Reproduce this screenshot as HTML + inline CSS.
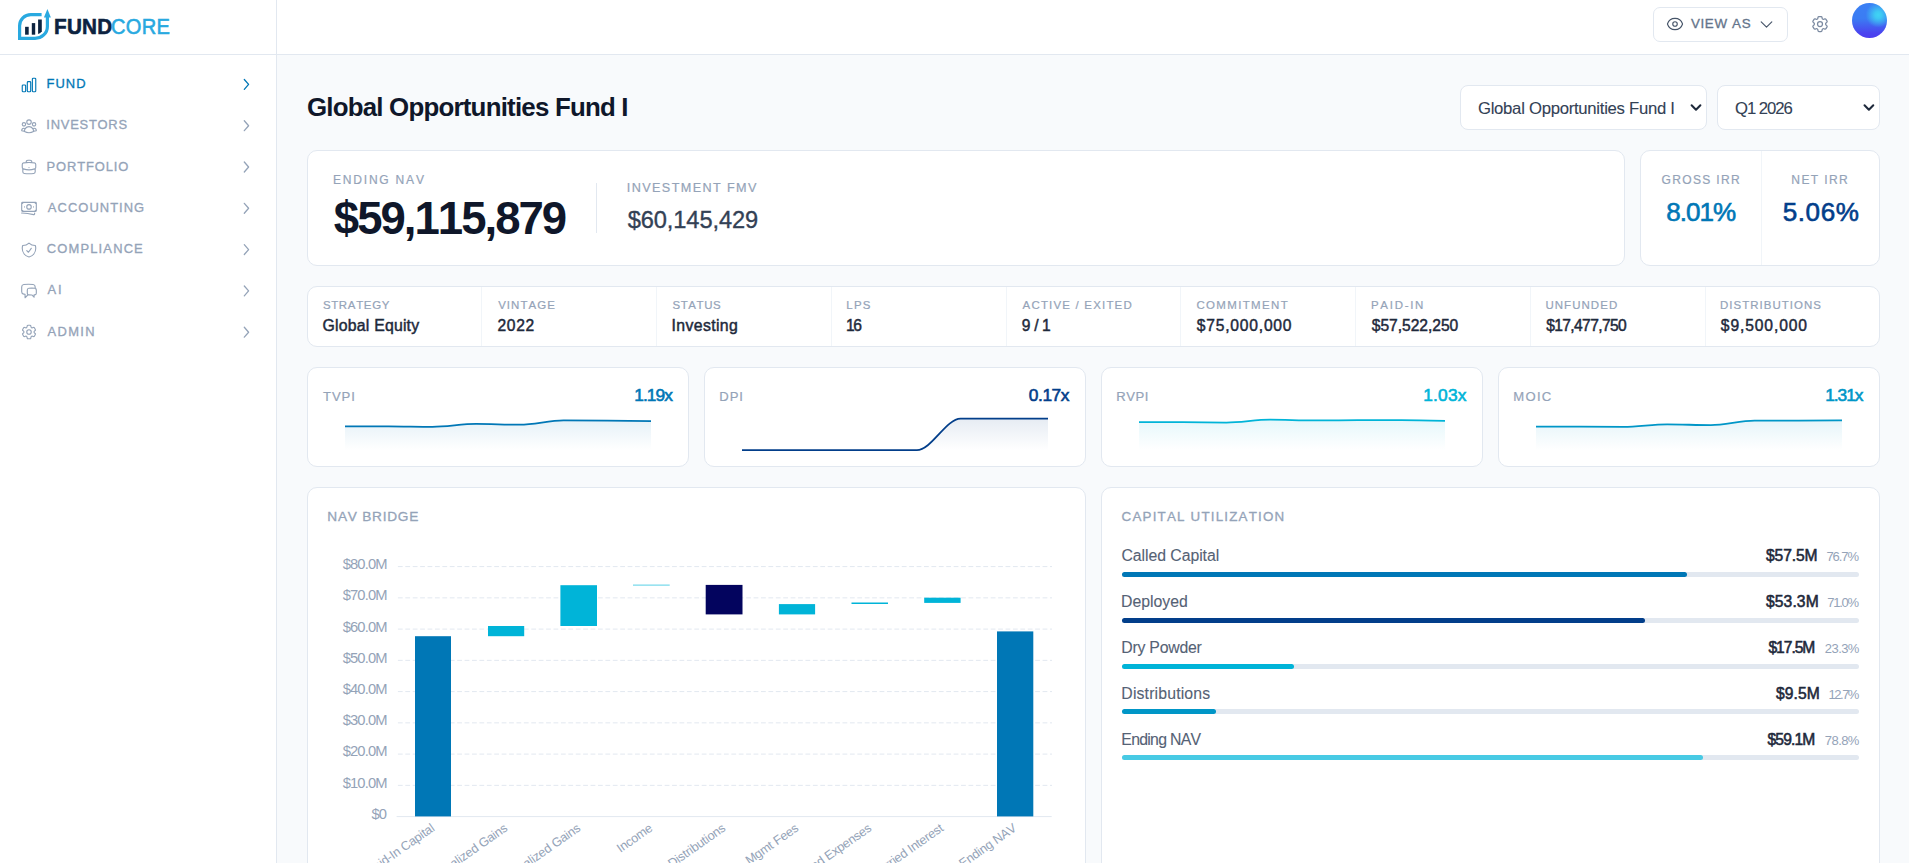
<!DOCTYPE html>
<html><head><meta charset="utf-8"><title>FundCore</title>
<style>
*{box-sizing:border-box;margin:0;padding:0}
html,body{width:1909px;height:863px;overflow:hidden;background:#f8fafc;font-family:'Liberation Sans',sans-serif}
.t{position:absolute;white-space:pre;font-kerning:none;font-family:'Liberation Sans',sans-serif}
.ic{position:absolute;overflow:visible}
.card{position:absolute;background:#fff;border:1px solid #e2e8f0;border-radius:10px}
.abs{position:absolute}
</style></head><body>

<div class="abs" style="left:0;top:0;width:277px;height:863px;background:#fff;border-right:1px solid #e2e8f0"></div>
<div class="abs" style="left:0;top:0;width:1909px;height:55px;background:#fff;border-bottom:1px solid #e2e8f0"></div>
<div class="abs" style="left:276px;top:0;width:1px;height:863px;background:#e2e8f0"></div>
<svg class="abs" style="left:0;top:0" width="60" height="50" viewBox="0 0 60 50">
<path d="M41.6,14.6 H30.8 C24.6,14.6 19.6,19.6 19.6,25.8 V38.3 H35 C41.8,38.3 47.4,33.2 47.4,26.4 V16" fill="none" stroke="#29a9e0" stroke-width="3.2" stroke-linejoin="miter"/>
<path d="M43.9,17.4 L47.4,9 L50.9,17.4 Z" fill="#29a9e0"/>
<g fill="#0c2340"><rect x="25.1" y="26.8" width="3.6" height="7.9"/><rect x="31.8" y="23.1" width="3.4" height="11.6"/><path d="M38.1,19.4 H41.8 V31.2 Q40.6,33.4 38.1,33.9 Z"/></g>
</svg>
<svg class="ic" style="left:19.75px;top:75.80px;width:18px;height:18px" viewBox="0 0 24 24" fill="none" stroke="#0077b6" stroke-width="1.5" stroke-linecap="round" stroke-linejoin="round"><path d="M3 13.125C3 12.504 3.504 12 4.125 12h2.25c.621 0 1.125.504 1.125 1.125v6.75C7.5 20.496 6.996 21 6.375 21h-2.25A1.125 1.125 0 0 1 3 19.875v-6.75ZM9.75 8.625c0-.621.504-1.125 1.125-1.125h2.25c.621 0 1.125.504 1.125 1.125v11.25c0 .621-.504 1.125-1.125 1.125h-2.25a1.125 1.125 0 0 1-1.125-1.125V8.625ZM16.5 4.125c0-.621.504-1.125 1.125-1.125h2.25C20.496 3 21 3.504 21 4.125v15.75c0 .621-.504 1.125-1.125 1.125h-2.25a1.125 1.125 0 0 1-1.125-1.125V4.125Z"/></svg>
<svg class="ic" style="left:0;top:0;width:1px;height:1px"><path d="M244.30,79.45 L248.60,84.40 L244.30,89.35" fill="none" stroke="#0077b6" stroke-width="1.3" stroke-linecap="round" stroke-linejoin="round"/></svg>
<svg class="ic" style="left:19.75px;top:116.98px;width:18px;height:18px" viewBox="0 0 24 24" fill="none" stroke="#94a3b8" stroke-width="1.5" stroke-linecap="round" stroke-linejoin="round"><path d="M18 18.72a9.094 9.094 0 0 0 3.741-.479 3 3 0 0 0-4.682-2.72m.94 3.198.001.031c0 .225-.012.447-.037.666A11.944 11.944 0 0 1 12 21c-2.17 0-4.207-.576-5.963-1.584A6.062 6.062 0 0 1 6 18.719m12 0a5.971 5.971 0 0 0-.941-3.197m0 0A5.995 5.995 0 0 0 12 12.75a5.995 5.995 0 0 0-5.058 2.772m0 0a3 3 0 0 0-4.681 2.72 8.986 8.986 0 0 0 3.74.477m.94-3.197a5.971 5.971 0 0 0-.94 3.197M15 6.75a3 3 0 1 1-6 0 3 3 0 0 1 6 0Zm6 3a2.25 2.25 0 1 1-4.5 0 2.25 2.25 0 0 1 4.5 0Zm-13.5 0a2.25 2.25 0 1 1-4.5 0 2.25 2.25 0 0 1 4.5 0Z"/></svg>
<svg class="ic" style="left:0;top:0;width:1px;height:1px"><path d="M244.30,120.75 L248.60,125.70 L244.30,130.65" fill="none" stroke="#94a3b8" stroke-width="1.3" stroke-linecap="round" stroke-linejoin="round"/></svg>
<svg class="ic" style="left:19.75px;top:158.16px;width:18px;height:18px" viewBox="0 0 24 24" fill="none" stroke="#94a3b8" stroke-width="1.5" stroke-linecap="round" stroke-linejoin="round"><path d="M20.25 14.15v4.25c0 1.094-.787 2.036-1.872 2.18-2.087.277-4.216.42-6.378.42s-4.291-.143-6.378-.42c-1.085-.144-1.872-1.086-1.872-2.18v-4.25m16.5 0a2.18 2.18 0 0 0 .75-1.661V8.706c0-1.081-.768-2.015-1.837-2.175a48.114 48.114 0 0 0-3.413-.387m4.5 8.006c-.194.165-.42.295-.673.38A23.978 23.978 0 0 1 12 15.75c-2.648 0-5.195-.429-7.577-1.22a2.016 2.016 0 0 1-.673-.38m0 0A2.18 2.18 0 0 1 3 12.489V8.706c0-1.081.768-2.015 1.837-2.175a48.111 48.111 0 0 1 3.413-.387m7.5 0V5.25A2.25 2.25 0 0 0 13.5 3h-3a2.25 2.25 0 0 0-2.25 2.25v.894m7.5 0a48.667 48.667 0 0 0-7.5 0M12 12.75h.008v.008H12v-.008Z"/></svg>
<svg class="ic" style="left:0;top:0;width:1px;height:1px"><path d="M244.30,162.05 L248.60,167.00 L244.30,171.95" fill="none" stroke="#94a3b8" stroke-width="1.3" stroke-linecap="round" stroke-linejoin="round"/></svg>
<svg class="ic" style="left:19.75px;top:199.34px;width:18px;height:18px" viewBox="0 0 24 24" fill="none" stroke="#94a3b8" stroke-width="1.5" stroke-linecap="round" stroke-linejoin="round"><path d="M2.25 18.75a60.07 60.07 0 0 1 15.797 2.101c.727.198 1.453-.342 1.453-1.096V18.75M3.75 4.5v.75A.75.75 0 0 1 3 6h-.75m0 0v-.375c0-.621.504-1.125 1.125-1.125H20.25M2.25 6v9m18-10.5v.75c0 .414.336.75.75.75h.75m-1.5-1.5h.375c.621 0 1.125.504 1.125 1.125v9.75c0 .621-.504 1.125-1.125 1.125h-.375m1.5-1.5H21a.75.75 0 0 0-.75.75v.75m0 0H3.75m0 0h-.375a1.125 1.125 0 0 1-1.125-1.125V15m1.5 1.5v-.75A.75.75 0 0 0 3 15h-.75M15 10.5a3 3 0 1 1-6 0 3 3 0 0 1 6 0Zm3 0h.008v.008H18V10.5Zm-12 0h.008v.008H6V10.5Z"/></svg>
<svg class="ic" style="left:0;top:0;width:1px;height:1px"><path d="M244.30,203.35 L248.60,208.30 L244.30,213.25" fill="none" stroke="#94a3b8" stroke-width="1.3" stroke-linecap="round" stroke-linejoin="round"/></svg>
<svg class="ic" style="left:19.75px;top:240.52px;width:18px;height:18px" viewBox="0 0 24 24" fill="none" stroke="#94a3b8" stroke-width="1.5" stroke-linecap="round" stroke-linejoin="round"><path d="M9 12.75 11.25 15 15 9.75m-3-7.036A11.959 11.959 0 0 1 3.598 6 11.99 11.99 0 0 0 3 9.749c0 5.592 3.824 10.29 9 11.623 5.176-1.332 9-6.03 9-11.622 0-1.31-.21-2.571-.598-3.751h-.152c-3.196 0-6.1-1.248-8.25-3.285Z"/></svg>
<svg class="ic" style="left:0;top:0;width:1px;height:1px"><path d="M244.30,244.65 L248.60,249.60 L244.30,254.55" fill="none" stroke="#94a3b8" stroke-width="1.3" stroke-linecap="round" stroke-linejoin="round"/></svg>
<svg class="ic" style="left:19.75px;top:281.70px;width:18px;height:18px" viewBox="0 0 24 24" fill="none" stroke="#94a3b8" stroke-width="1.5" stroke-linecap="round" stroke-linejoin="round"><path d="M20.25 8.511c.884.284 1.5 1.128 1.5 2.097v4.286c0 1.136-.847 2.1-1.98 2.193-.34.027-.68.052-1.02.072v3.091l-3-3c-1.354 0-2.694-.055-4.02-.163a2.115 2.115 0 0 1-.825-.242m9.345-8.334a2.126 2.126 0 0 0-.476-.095 48.64 48.64 0 0 0-8.048 0c-1.131.094-1.976 1.057-1.976 2.192v4.286c0 .837.46 1.58 1.155 1.951m9.345-8.334V6.637c0-1.621-1.152-3.026-2.76-3.235A48.455 48.455 0 0 0 11.25 3c-2.115 0-4.198.137-6.24.402-1.608.209-2.76 1.614-2.76 3.235v6.226c0 1.621 1.152 3.026 2.76 3.235.577.075 1.157.14 1.74.194V21l4.155-4.155"/></svg>
<svg class="ic" style="left:0;top:0;width:1px;height:1px"><path d="M244.30,285.95 L248.60,290.90 L244.30,295.85" fill="none" stroke="#94a3b8" stroke-width="1.3" stroke-linecap="round" stroke-linejoin="round"/></svg>
<svg class="ic" style="left:19.75px;top:322.88px;width:18px;height:18px" viewBox="0 0 24 24" fill="none" stroke="#94a3b8" stroke-width="1.5" stroke-linecap="round" stroke-linejoin="round"><path d="M9.594 3.94c.09-.542.56-.94 1.11-.94h2.593c.55 0 1.02.398 1.11.94l.213 1.281c.063.374.313.686.645.87.074.04.147.083.22.127.325.196.72.257 1.075.124l1.217-.456a1.125 1.125 0 0 1 1.37.49l1.296 2.247a1.125 1.125 0 0 1-.26 1.431l-1.003.827c-.293.241-.438.613-.43.992a7.723 7.723 0 0 1 0 .255c-.008.378.137.75.43.991l1.004.827c.424.35.534.955.26 1.43l-1.298 2.247a1.125 1.125 0 0 1-1.369.491l-1.217-.456c-.355-.133-.75-.072-1.076.124a6.47 6.47 0 0 1-.22.128c-.331.183-.581.495-.644.869l-.213 1.281c-.09.543-.56.94-1.11.94h-2.594c-.55 0-1.019-.398-1.11-.94l-.213-1.281c-.062-.374-.312-.686-.644-.87a6.52 6.52 0 0 1-.22-.127c-.325-.196-.72-.257-1.076-.124l-1.217.456a1.125 1.125 0 0 1-1.369-.49l-1.297-2.247a1.125 1.125 0 0 1 .26-1.431l1.004-.827c.292-.24.437-.613.43-.991a6.932 6.932 0 0 1 0-.255c.007-.38-.138-.751-.43-.992l-1.004-.827a1.125 1.125 0 0 1-.26-1.43l1.297-2.247a1.125 1.125 0 0 1 1.37-.491l1.216.456c.356.133.751.072 1.076-.124.072-.044.146-.086.22-.128.332-.183.582-.495.644-.869l.214-1.28Z"/><path d="M15 12a3 3 0 1 1-6 0 3 3 0 0 1 6 0Z"/></svg>
<svg class="ic" style="left:0;top:0;width:1px;height:1px"><path d="M244.30,327.25 L248.60,332.20 L244.30,337.15" fill="none" stroke="#94a3b8" stroke-width="1.3" stroke-linecap="round" stroke-linejoin="round"/></svg>
<div class="abs" style="left:1653px;top:7px;width:135px;height:35px;border:1px solid #e2e8f0;border-radius:7px;background:#fff"></div>
<svg class="ic" style="left:1666.00px;top:15.20px;width:18px;height:18px" viewBox="0 0 24 24" fill="none" stroke="#475569" stroke-width="1.5" stroke-linecap="round" stroke-linejoin="round"><path d="M2.036 12.322a1.012 1.012 0 0 1 0-.639C3.423 7.51 7.36 4.5 12 4.5c4.638 0 8.573 3.007 9.963 7.178.07.207.07.431 0 .639C20.577 16.49 16.64 19.5 12 19.5c-4.638 0-8.573-3.007-9.963-7.178Z"/><path d="M15 12a3 3 0 1 1-6 0 3 3 0 0 1 6 0Z"/></svg>
<svg class="ic" style="left:1758.00px;top:15.80px;width:17px;height:17px" viewBox="0 0 24 24" fill="none" stroke="#475569" stroke-width="1.6" stroke-linecap="round" stroke-linejoin="round"><path d="m19.5 8.25-7.5 7.5-7.5-7.5"/></svg>
<svg class="ic" style="left:1810.00px;top:14.00px;width:20px;height:20px" viewBox="0 0 24 24" fill="none" stroke="#7b8aa1" stroke-width="1.5" stroke-linecap="round" stroke-linejoin="round"><path d="M9.594 3.94c.09-.542.56-.94 1.11-.94h2.593c.55 0 1.02.398 1.11.94l.213 1.281c.063.374.313.686.645.87.074.04.147.083.22.127.325.196.72.257 1.075.124l1.217-.456a1.125 1.125 0 0 1 1.37.49l1.296 2.247a1.125 1.125 0 0 1-.26 1.431l-1.003.827c-.293.241-.438.613-.43.992a7.723 7.723 0 0 1 0 .255c-.008.378.137.75.43.991l1.004.827c.424.35.534.955.26 1.43l-1.298 2.247a1.125 1.125 0 0 1-1.369.491l-1.217-.456c-.355-.133-.75-.072-1.076.124a6.47 6.47 0 0 1-.22.128c-.331.183-.581.495-.644.869l-.213 1.281c-.09.543-.56.94-1.11.94h-2.594c-.55 0-1.019-.398-1.11-.94l-.213-1.281c-.062-.374-.312-.686-.644-.87a6.52 6.52 0 0 1-.22-.127c-.325-.196-.72-.257-1.076-.124l-1.217.456a1.125 1.125 0 0 1-1.369-.49l-1.297-2.247a1.125 1.125 0 0 1 .26-1.431l1.004-.827c.292-.24.437-.613.43-.991a6.932 6.932 0 0 1 0-.255c.007-.38-.138-.751-.43-.992l-1.004-.827a1.125 1.125 0 0 1-.26-1.43l1.297-2.247a1.125 1.125 0 0 1 1.37-.491l1.216.456c.356.133.751.072 1.076-.124.072-.044.146-.086.22-.128.332-.183.582-.495.644-.869l.214-1.28Z"/><path d="M15 12a3 3 0 1 1-6 0 3 3 0 0 1 6 0Z"/></svg>
<div class="abs" style="left:1852px;top:3px;width:35px;height:35px;border-radius:50%;background:radial-gradient(circle at 75% 34%, #40d4f4 0%, #3ec8f3 10%, rgba(59,150,246,0) 36%), linear-gradient(180deg,#3b80f5 0%,#3b7cf3 45%,#4a45ef 85%,#4b3cef 100%)"></div>
<div class="abs" style="left:1460px;top:85px;width:247px;height:45px;border:1px solid #e2e8f0;border-radius:8px;background:#fff"></div>
<div class="abs" style="left:1717px;top:85px;width:163px;height:45px;border:1px solid #e2e8f0;border-radius:8px;background:#fff"></div>
<svg class="abs" style="left:0;top:0;overflow:visible" width="1" height="1"><g fill="none" stroke="#1e293b" stroke-width="2" stroke-linecap="round" stroke-linejoin="round"><path d="M1691.6,105.2 L1696,109.8 L1700.4,105.2"/><path d="M1864.5,105.2 L1868.9,109.8 L1873.3,105.2"/></g></svg>
<div class="card" style="left:307px;top:150px;width:1318px;height:116px;"></div>
<div class="abs" style="left:596px;top:183px;width:1px;height:50px;background:#e2e8f0"></div>
<div class="card" style="left:1640px;top:150px;width:240px;height:116px;"></div>
<div class="abs" style="left:1761px;top:151px;width:1px;height:114px;background:#f1f5f9"></div>
<div class="card" style="left:307px;top:286px;width:1573px;height:61px;"></div>
<div class="abs" style="left:481px;top:287px;width:1px;height:59px;background:#f1f5f9"></div>
<div class="abs" style="left:656px;top:287px;width:1px;height:59px;background:#f1f5f9"></div>
<div class="abs" style="left:831px;top:287px;width:1px;height:59px;background:#f1f5f9"></div>
<div class="abs" style="left:1006px;top:287px;width:1px;height:59px;background:#f1f5f9"></div>
<div class="abs" style="left:1180px;top:287px;width:1px;height:59px;background:#f1f5f9"></div>
<div class="abs" style="left:1355px;top:287px;width:1px;height:59px;background:#f1f5f9"></div>
<div class="abs" style="left:1530px;top:287px;width:1px;height:59px;background:#f1f5f9"></div>
<div class="abs" style="left:1705px;top:287px;width:1px;height:59px;background:#f1f5f9"></div>
<div class="card" style="left:307px;top:367px;width:382px;height:100px"></div>
<div class="card" style="left:704px;top:367px;width:382px;height:100px"></div>
<div class="card" style="left:1101px;top:367px;width:382px;height:100px"></div>
<div class="card" style="left:1498px;top:367px;width:382px;height:100px"></div>
<div class="card" style="left:307px;top:487px;width:779px;height:414px;"></div>
<div class="card" style="left:1101px;top:487px;width:779px;height:414px;"></div>
<svg class="abs" style="left:0;top:0" width="1909" height="863" viewBox="0 0 1909 863"><defs><linearGradient id="g0" x1="0" y1="0" x2="0" y2="1"><stop offset="0" stop-color="#0077b6" stop-opacity="0.1"/><stop offset="1" stop-color="#0077b6" stop-opacity="0"/></linearGradient><linearGradient id="g1" x1="0" y1="0" x2="0" y2="1"><stop offset="0" stop-color="#023e8a" stop-opacity="0.1"/><stop offset="1" stop-color="#023e8a" stop-opacity="0"/></linearGradient><linearGradient id="g2" x1="0" y1="0" x2="0" y2="1"><stop offset="0" stop-color="#00b4d8" stop-opacity="0.1"/><stop offset="1" stop-color="#00b4d8" stop-opacity="0"/></linearGradient><linearGradient id="g3" x1="0" y1="0" x2="0" y2="1"><stop offset="0" stop-color="#0096c7" stop-opacity="0.1"/><stop offset="1" stop-color="#0096c7" stop-opacity="0"/></linearGradient></defs><path d="M345.00,426.30C359.57,426.30 374.14,426.30 388.71,426.30C403.29,426.30 417.86,426.80 432.43,426.80C447.00,426.80 461.57,423.90 476.14,423.90C490.71,423.90 505.29,424.70 519.86,424.70C534.43,424.70 549.00,420.40 563.57,420.40C578.14,420.40 592.71,420.48 607.29,420.60C621.86,420.72 636.43,420.91 651.00,421.10 L651,450.5 L345,450.5 Z" fill="url(#g0)"/><path d="M345.00,426.30C359.57,426.30 374.14,426.30 388.71,426.30C403.29,426.30 417.86,426.80 432.43,426.80C447.00,426.80 461.57,423.90 476.14,423.90C490.71,423.90 505.29,424.70 519.86,424.70C534.43,424.70 549.00,420.40 563.57,420.40C578.14,420.40 592.71,420.48 607.29,420.60C621.86,420.72 636.43,420.91 651.00,421.10" fill="none" stroke="#0077b6" stroke-width="1.8"/><path d="M742.00,450.20C756.57,450.20 771.14,450.20 785.71,450.20C800.29,450.20 814.86,450.20 829.43,450.20C844.00,450.20 858.57,450.20 873.14,450.20C887.71,450.20 902.29,450.20 916.86,450.20C931.43,450.20 946.00,418.70 960.57,418.70C975.14,418.70 989.71,418.70 1004.29,418.70C1018.86,418.70 1033.43,418.70 1048.00,418.70 L1048,450.5 L742,450.5 Z" fill="url(#g1)"/><path d="M742.00,450.20C756.57,450.20 771.14,450.20 785.71,450.20C800.29,450.20 814.86,450.20 829.43,450.20C844.00,450.20 858.57,450.20 873.14,450.20C887.71,450.20 902.29,450.20 916.86,450.20C931.43,450.20 946.00,418.70 960.57,418.70C975.14,418.70 989.71,418.70 1004.29,418.70C1018.86,418.70 1033.43,418.70 1048.00,418.70" fill="none" stroke="#023e8a" stroke-width="1.8"/><path d="M1139.00,422.10C1153.57,422.12 1168.14,422.13 1182.71,422.20C1197.29,422.27 1211.86,422.60 1226.43,422.60C1241.00,422.60 1255.57,419.70 1270.14,419.70C1284.71,419.70 1299.29,420.40 1313.86,420.40C1328.43,420.40 1343.00,420.25 1357.57,420.20C1372.14,420.15 1386.71,420.10 1401.29,420.10C1415.86,420.10 1430.43,420.50 1445.00,420.90 L1445,450.5 L1139,450.5 Z" fill="url(#g2)"/><path d="M1139.00,422.10C1153.57,422.12 1168.14,422.13 1182.71,422.20C1197.29,422.27 1211.86,422.60 1226.43,422.60C1241.00,422.60 1255.57,419.70 1270.14,419.70C1284.71,419.70 1299.29,420.40 1313.86,420.40C1328.43,420.40 1343.00,420.25 1357.57,420.20C1372.14,420.15 1386.71,420.10 1401.29,420.10C1415.86,420.10 1430.43,420.50 1445.00,420.90" fill="none" stroke="#00b4d8" stroke-width="1.8"/><path d="M1536.00,426.60C1550.57,426.60 1565.14,426.60 1579.71,426.60C1594.29,426.60 1608.86,426.90 1623.43,426.90C1638.00,426.90 1652.57,424.40 1667.14,424.40C1681.71,424.40 1696.29,425.10 1710.86,425.10C1725.43,425.10 1740.00,420.70 1754.57,420.70C1769.14,420.70 1783.71,420.70 1798.29,420.70C1812.86,420.70 1827.43,420.55 1842.00,420.40 L1842,450.5 L1536,450.5 Z" fill="url(#g3)"/><path d="M1536.00,426.60C1550.57,426.60 1565.14,426.60 1579.71,426.60C1594.29,426.60 1608.86,426.90 1623.43,426.90C1638.00,426.90 1652.57,424.40 1667.14,424.40C1681.71,424.40 1696.29,425.10 1710.86,425.10C1725.43,425.10 1740.00,420.70 1754.57,420.70C1769.14,420.70 1783.71,420.70 1798.29,420.70C1812.86,420.70 1827.43,420.55 1842.00,420.40" fill="none" stroke="#0096c7" stroke-width="1.8"/><line x1="397.9" y1="785.35" x2="1052" y2="785.35" stroke="#e2e8f0" stroke-width="1" stroke-dasharray="4.8 2.61"/><line x1="397.9" y1="754.10" x2="1052" y2="754.10" stroke="#e2e8f0" stroke-width="1" stroke-dasharray="4.8 2.61"/><line x1="397.9" y1="722.85" x2="1052" y2="722.85" stroke="#e2e8f0" stroke-width="1" stroke-dasharray="4.8 2.61"/><line x1="397.9" y1="691.60" x2="1052" y2="691.60" stroke="#e2e8f0" stroke-width="1" stroke-dasharray="4.8 2.61"/><line x1="397.9" y1="660.35" x2="1052" y2="660.35" stroke="#e2e8f0" stroke-width="1" stroke-dasharray="4.8 2.61"/><line x1="397.9" y1="629.10" x2="1052" y2="629.10" stroke="#e2e8f0" stroke-width="1" stroke-dasharray="4.8 2.61"/><line x1="397.9" y1="597.85" x2="1052" y2="597.85" stroke="#e2e8f0" stroke-width="1" stroke-dasharray="4.8 2.61"/><line x1="397.9" y1="566.60" x2="1052" y2="566.60" stroke="#e2e8f0" stroke-width="1" stroke-dasharray="4.8 2.61"/><line x1="396.6" y1="816.60" x2="1051.7" y2="816.60" stroke="#e2e8f0" stroke-width="1"/><rect x="415" y="636.2" width="36.00" height="180.20" fill="#0077b6"/><rect x="488" y="626" width="36.20" height="10.20" fill="#00b4d8"/><rect x="560.4" y="585.2" width="36.60" height="40.80" fill="#00b4d8"/><rect x="633" y="584.4" width="36.70" height="1.50" fill="#90e0ef"/><rect x="705.7" y="584.9" width="36.80" height="29.50" fill="#03045e"/><rect x="778.9" y="604.1" width="36.20" height="10.30" fill="#00b4d8"/><rect x="851.5" y="602.5" width="36.50" height="1.50" fill="#00b4d8"/><rect x="924.2" y="597.7" width="36.40" height="5.20" fill="#00b4d8"/><rect x="997" y="631.4" width="36.30" height="185.00" fill="#0077b6"/></svg>
<div class="abs" style="left:1122px;top:572.00px;width:737px;height:5px;border-radius:3px;background:#e2e8f0"></div>
<div class="abs" style="left:1122px;top:572.00px;width:565.28px;height:5px;border-radius:3px;background:#0077b6"></div>
<div class="abs" style="left:1122px;top:617.80px;width:737px;height:5px;border-radius:3px;background:#e2e8f0"></div>
<div class="abs" style="left:1122px;top:617.80px;width:523.27px;height:5px;border-radius:3px;background:#023e8a"></div>
<div class="abs" style="left:1122px;top:663.60px;width:737px;height:5px;border-radius:3px;background:#e2e8f0"></div>
<div class="abs" style="left:1122px;top:663.60px;width:171.72px;height:5px;border-radius:3px;background:#00b4d8"></div>
<div class="abs" style="left:1122px;top:709.40px;width:737px;height:5px;border-radius:3px;background:#e2e8f0"></div>
<div class="abs" style="left:1122px;top:709.40px;width:93.60px;height:5px;border-radius:3px;background:#0096c7"></div>
<div class="abs" style="left:1122px;top:755.20px;width:737px;height:5px;border-radius:3px;background:#e2e8f0"></div>
<div class="abs" style="left:1122px;top:755.20px;width:580.76px;height:5px;border-radius:3px;background:#48cae4"></div>
<div class="t" style="left:53.62px;top:13px;font-size:22.67px;line-height:26px;font-weight:700;letter-spacing:0.300px;color:#0c2340;-webkit-text-stroke:0.6px #0c2340;transform:scaleX(0.9120);transform-origin:0 0;">FUND</div>
<div class="t" style="left:110.98px;top:13px;font-size:22.67px;line-height:26px;font-weight:400;letter-spacing:0.300px;color:#29a9e0;-webkit-text-stroke:0.6px #29a9e0;transform:scaleX(0.8867);transform-origin:0 0;">CORE</div>
<div class="t" style="left:46.44px;top:76px;font-size:12.94px;line-height:15px;font-weight:400;letter-spacing:1.084px;color:#0077b6;-webkit-text-stroke:0.3px #0077b6;">FUND</div>
<div class="t" style="left:46.31px;top:117px;font-size:12.94px;line-height:15px;font-weight:400;letter-spacing:0.754px;color:#94a3b8;-webkit-text-stroke:0.3px #94a3b8;">INVESTORS</div>
<div class="t" style="left:46.44px;top:159px;font-size:12.94px;line-height:15px;font-weight:400;letter-spacing:0.904px;color:#94a3b8;-webkit-text-stroke:0.3px #94a3b8;">PORTFOLIO</div>
<div class="t" style="left:47.87px;top:200px;font-size:12.94px;line-height:15px;font-weight:400;letter-spacing:1.037px;color:#94a3b8;-webkit-text-stroke:0.3px #94a3b8;">ACCOUNTING</div>
<div class="t" style="left:46.84px;top:241px;font-size:12.94px;line-height:15px;font-weight:400;letter-spacing:1.153px;color:#94a3b8;-webkit-text-stroke:0.3px #94a3b8;">COMPLIANCE</div>
<div class="t" style="left:47.47px;top:282px;font-size:12.94px;line-height:15px;font-weight:400;letter-spacing:1.997px;color:#94a3b8;-webkit-text-stroke:0.3px #94a3b8;">AI</div>
<div class="t" style="left:47.47px;top:324px;font-size:12.94px;line-height:15px;font-weight:400;letter-spacing:1.374px;color:#94a3b8;-webkit-text-stroke:0.3px #94a3b8;">ADMIN</div>
<div class="t" style="left:1690.94px;top:16px;font-size:13.37px;line-height:15px;font-weight:400;letter-spacing:0.657px;color:#64748b;-webkit-text-stroke:0.3px #64748b;">VIEW AS</div>
<div class="t" style="left:306.94px;top:93px;font-size:25.87px;line-height:28px;font-weight:700;letter-spacing:-0.780px;color:#0f172a;">Global Opportunities Fund I</div>
<div class="t" style="left:1477.96px;top:99px;font-size:16.72px;line-height:19px;font-weight:400;letter-spacing:-0.278px;color:#334155;-webkit-text-stroke:0.1px #334155;">Global Opportunities Fund I</div>
<div class="t" style="left:1735.01px;top:99px;font-size:16.72px;line-height:19px;font-weight:400;letter-spacing:-1.067px;color:#334155;-webkit-text-stroke:0.1px #334155;">Q1 2026</div>
<div class="t" style="left:333.01px;top:173px;font-size:12.06px;line-height:14px;font-weight:400;letter-spacing:1.774px;color:#94a3b8;-webkit-text-stroke:0.2px #94a3b8;">ENDING NAV</div>
<div class="t" style="left:333.80px;top:193px;font-size:45.54px;line-height:51px;font-weight:700;letter-spacing:-1.988px;color:#0f172a;">$59,115,879</div>
<div class="t" style="left:626.83px;top:181px;font-size:12.65px;line-height:14px;font-weight:400;letter-spacing:1.378px;color:#94a3b8;-webkit-text-stroke:0.2px #94a3b8;">INVESTMENT FMV</div>
<div class="t" style="left:627.75px;top:207px;font-size:23.63px;line-height:26px;font-weight:400;letter-spacing:-0.104px;color:#334155;-webkit-text-stroke:0.35px #334155;">$60,145,429</div>
<div class="t" style="left:1661.49px;top:173px;font-size:12.06px;line-height:14px;font-weight:400;letter-spacing:1.333px;color:#94a3b8;-webkit-text-stroke:0.2px #94a3b8;">GROSS IRR</div>
<div class="t" style="left:1666.17px;top:197px;font-size:26.07px;line-height:30px;font-weight:400;letter-spacing:-0.961px;color:#0077b6;-webkit-text-stroke:0.6px #0077b6;">8.01%</div>
<div class="t" style="left:1791.31px;top:173px;font-size:12.06px;line-height:14px;font-weight:400;letter-spacing:1.382px;color:#94a3b8;-webkit-text-stroke:0.2px #94a3b8;">NET IRR</div>
<div class="t" style="left:1782.66px;top:197px;font-size:26.07px;line-height:30px;font-weight:400;letter-spacing:0.591px;color:#023e8a;-webkit-text-stroke:0.6px #023e8a;">5.06%</div>
<div class="t" style="left:322.88px;top:299px;font-size:11.48px;line-height:12px;font-weight:400;letter-spacing:0.669px;color:#94a3b8;-webkit-text-stroke:0.2px #94a3b8;">STRATEGY</div>
<div class="t" style="left:322.60px;top:317px;font-size:15.84px;line-height:17px;font-weight:400;letter-spacing:0.200px;color:#1e293b;-webkit-text-stroke:0.45px #1e293b;">Global Equity</div>
<div class="t" style="left:498.15px;top:299px;font-size:11.48px;line-height:12px;font-weight:400;letter-spacing:1.073px;color:#94a3b8;-webkit-text-stroke:0.2px #94a3b8;">VINTAGE</div>
<div class="t" style="left:497.41px;top:317px;font-size:15.61px;line-height:17px;font-weight:400;letter-spacing:0.714px;color:#1e293b;-webkit-text-stroke:0.45px #1e293b;">2022</div>
<div class="t" style="left:672.38px;top:299px;font-size:11.48px;line-height:12px;font-weight:400;letter-spacing:0.630px;color:#94a3b8;-webkit-text-stroke:0.2px #94a3b8;">STATUS</div>
<div class="t" style="left:671.44px;top:317px;font-size:15.84px;line-height:17px;font-weight:400;letter-spacing:0.384px;color:#1e293b;-webkit-text-stroke:0.45px #1e293b;">Investing</div>
<div class="t" style="left:846.36px;top:299px;font-size:11.48px;line-height:12px;font-weight:400;letter-spacing:1.233px;color:#94a3b8;-webkit-text-stroke:0.2px #94a3b8;">LPS</div>
<div class="t" style="left:846.11px;top:317px;font-size:15.61px;line-height:17px;font-weight:400;letter-spacing:-1.589px;color:#1e293b;-webkit-text-stroke:0.45px #1e293b;">16</div>
<div class="t" style="left:1022.58px;top:299px;font-size:11.48px;line-height:12px;font-weight:400;letter-spacing:1.197px;color:#94a3b8;-webkit-text-stroke:0.2px #94a3b8;">ACTIVE / EXITED</div>
<div class="t" style="left:1021.87px;top:317px;font-size:15.61px;line-height:17px;font-weight:400;letter-spacing:-0.370px;color:#1e293b;-webkit-text-stroke:0.45px #1e293b;">9 / 1</div>
<div class="t" style="left:1196.42px;top:299px;font-size:11.48px;line-height:12px;font-weight:400;letter-spacing:1.362px;color:#94a3b8;-webkit-text-stroke:0.2px #94a3b8;">COMMITMENT</div>
<div class="t" style="left:1196.83px;top:317px;font-size:15.61px;line-height:17px;font-weight:400;letter-spacing:0.787px;color:#1e293b;-webkit-text-stroke:0.45px #1e293b;">$75,000,000</div>
<div class="t" style="left:1370.96px;top:299px;font-size:11.48px;line-height:12px;font-weight:400;letter-spacing:1.729px;color:#94a3b8;-webkit-text-stroke:0.2px #94a3b8;">PAID-IN</div>
<div class="t" style="left:1371.73px;top:317px;font-size:15.61px;line-height:17px;font-weight:400;letter-spacing:-0.023px;color:#1e293b;-webkit-text-stroke:0.45px #1e293b;">$57,522,250</div>
<div class="t" style="left:1545.41px;top:299px;font-size:11.48px;line-height:12px;font-weight:400;letter-spacing:1.058px;color:#94a3b8;-webkit-text-stroke:0.2px #94a3b8;">UNFUNDED</div>
<div class="t" style="left:1546.13px;top:317px;font-size:15.61px;line-height:17px;font-weight:400;letter-spacing:-0.623px;color:#1e293b;-webkit-text-stroke:0.45px #1e293b;">$17,477,750</div>
<div class="t" style="left:1720.06px;top:299px;font-size:11.48px;line-height:12px;font-weight:400;letter-spacing:1.024px;color:#94a3b8;-webkit-text-stroke:0.2px #94a3b8;">DISTRIBUTIONS</div>
<div class="t" style="left:1720.83px;top:317px;font-size:15.61px;line-height:17px;font-weight:400;letter-spacing:0.894px;color:#1e293b;-webkit-text-stroke:0.45px #1e293b;">$9,500,000</div>
<div class="t" style="left:323.11px;top:389px;font-size:13.08px;line-height:15px;font-weight:400;letter-spacing:0.875px;color:#94a3b8;-webkit-text-stroke:0.2px #94a3b8;">TVPI</div>
<div class="t" style="left:634.18px;top:385px;font-size:17.33px;line-height:20px;font-weight:400;letter-spacing:-0.922px;color:#0077b6;-webkit-text-stroke:0.6px #0077b6;">1.19x</div>
<div class="t" style="left:719.33px;top:389px;font-size:13.08px;line-height:15px;font-weight:400;letter-spacing:0.937px;color:#94a3b8;-webkit-text-stroke:0.2px #94a3b8;">DPI</div>
<div class="t" style="left:1028.82px;top:385px;font-size:17.33px;line-height:20px;font-weight:400;letter-spacing:-0.432px;color:#023e8a;-webkit-text-stroke:0.6px #023e8a;">0.17x</div>
<div class="t" style="left:1116.33px;top:389px;font-size:13.08px;line-height:15px;font-weight:400;letter-spacing:0.516px;color:#94a3b8;-webkit-text-stroke:0.2px #94a3b8;">RVPI</div>
<div class="t" style="left:1423.18px;top:385px;font-size:17.33px;line-height:20px;font-weight:400;letter-spacing:0.228px;color:#00b4d8;-webkit-text-stroke:0.6px #00b4d8;">1.03x</div>
<div class="t" style="left:1513.33px;top:389px;font-size:13.08px;line-height:15px;font-weight:400;letter-spacing:1.272px;color:#94a3b8;-webkit-text-stroke:0.2px #94a3b8;">MOIC</div>
<div class="t" style="left:1825.18px;top:385px;font-size:17.33px;line-height:20px;font-weight:400;letter-spacing:-1.022px;color:#0096c7;-webkit-text-stroke:0.6px #0096c7;">1.31x</div>
<div class="t" style="left:327.28px;top:509px;font-size:13.66px;line-height:15px;font-weight:400;letter-spacing:0.759px;color:#94a3b8;-webkit-text-stroke:0.3px #94a3b8;">NAV BRIDGE</div>
<div class="t" style="left:1121.62px;top:509px;font-size:13.37px;line-height:15px;font-weight:400;letter-spacing:1.200px;color:#94a3b8;-webkit-text-stroke:0.3px #94a3b8;">CAPITAL UTILIZATION</div>
<div class="t" style="left:1121.50px;top:547px;font-size:15.84px;line-height:17px;font-weight:400;letter-spacing:-0.067px;color:#556275;-webkit-text-stroke:0.1px #556275;">Called Capital</div>
<div class="t" style="left:1766.03px;top:547px;font-size:15.61px;line-height:17px;font-weight:400;letter-spacing:-0.124px;color:#1e293b;-webkit-text-stroke:0.55px #1e293b;">$57.5M</div>
<div class="t" style="left:1826.43px;top:549px;font-size:13.03px;line-height:15px;font-weight:400;letter-spacing:-1.055px;color:#94a3b8;">76.7%</div>
<div class="t" style="left:1121.00px;top:593px;font-size:15.84px;line-height:17px;font-weight:400;letter-spacing:-0.003px;color:#556275;-webkit-text-stroke:0.1px #556275;">Deployed</div>
<div class="t" style="left:1766.03px;top:593px;font-size:15.61px;line-height:17px;font-weight:400;letter-spacing:0.116px;color:#1e293b;-webkit-text-stroke:0.55px #1e293b;">$53.3M</div>
<div class="t" style="left:1827.33px;top:595px;font-size:13.03px;line-height:15px;font-weight:400;letter-spacing:-1.280px;color:#94a3b8;">71.0%</div>
<div class="t" style="left:1121.30px;top:639px;font-size:15.84px;line-height:17px;font-weight:400;letter-spacing:-0.244px;color:#556275;-webkit-text-stroke:0.1px #556275;">Dry Powder</div>
<div class="t" style="left:1768.43px;top:639px;font-size:15.61px;line-height:17px;font-weight:400;letter-spacing:-1.024px;color:#1e293b;-webkit-text-stroke:0.55px #1e293b;">$17.5M</div>
<div class="t" style="left:1824.84px;top:641px;font-size:13.03px;line-height:15px;font-weight:400;letter-spacing:-0.583px;color:#94a3b8;">23.3%</div>
<div class="t" style="left:1121.30px;top:685px;font-size:15.84px;line-height:17px;font-weight:400;letter-spacing:0.150px;color:#556275;-webkit-text-stroke:0.1px #556275;">Distributions</div>
<div class="t" style="left:1775.93px;top:685px;font-size:15.61px;line-height:17px;font-weight:400;letter-spacing:0.140px;color:#1e293b;-webkit-text-stroke:0.55px #1e293b;">$9.5M</div>
<div class="t" style="left:1828.61px;top:687px;font-size:13.03px;line-height:15px;font-weight:400;letter-spacing:-1.524px;color:#94a3b8;">12.7%</div>
<div class="t" style="left:1121.30px;top:731px;font-size:15.84px;line-height:17px;font-weight:400;letter-spacing:-0.716px;color:#556275;-webkit-text-stroke:0.1px #556275;">Ending NAV</div>
<div class="t" style="left:1767.43px;top:731px;font-size:15.61px;line-height:17px;font-weight:400;letter-spacing:-0.824px;color:#1e293b;-webkit-text-stroke:0.55px #1e293b;">$59.1M</div>
<div class="t" style="left:1824.83px;top:733px;font-size:13.03px;line-height:15px;font-weight:400;letter-spacing:-0.580px;color:#94a3b8;">78.8%</div>
<div class="t" style="left:371.41px;top:806px;font-size:14.76px;line-height:16px;font-weight:400;letter-spacing:-0.850px;color:#94a3b8;">$0</div>
<div class="t" style="left:342.64px;top:775px;font-size:14.76px;line-height:16px;font-weight:400;letter-spacing:-0.850px;color:#94a3b8;">$10.0M</div>
<div class="t" style="left:342.64px;top:743px;font-size:14.76px;line-height:16px;font-weight:400;letter-spacing:-0.850px;color:#94a3b8;">$20.0M</div>
<div class="t" style="left:342.64px;top:712px;font-size:14.76px;line-height:16px;font-weight:400;letter-spacing:-0.850px;color:#94a3b8;">$30.0M</div>
<div class="t" style="left:342.64px;top:681px;font-size:14.76px;line-height:16px;font-weight:400;letter-spacing:-0.850px;color:#94a3b8;">$40.0M</div>
<div class="t" style="left:342.64px;top:650px;font-size:14.76px;line-height:16px;font-weight:400;letter-spacing:-0.850px;color:#94a3b8;">$50.0M</div>
<div class="t" style="left:342.64px;top:619px;font-size:14.76px;line-height:16px;font-weight:400;letter-spacing:-0.850px;color:#94a3b8;">$60.0M</div>
<div class="t" style="left:342.64px;top:587px;font-size:14.76px;line-height:16px;font-weight:400;letter-spacing:-0.850px;color:#94a3b8;">$70.0M</div>
<div class="t" style="left:342.64px;top:556px;font-size:14.76px;line-height:16px;font-weight:400;letter-spacing:-0.850px;color:#94a3b8;">$80.0M</div>
<div class="t" style="left:429.00px;top:821px;font-size:12.6px;line-height:14px;color:#94a3b8;letter-spacing:-0.2px;transform-origin:0 0;transform:rotate(-35deg) translateX(-100%)">Paid-In Capital</div>
<div class="t" style="left:501.78px;top:821px;font-size:12.6px;line-height:14px;color:#94a3b8;letter-spacing:-0.2px;transform-origin:0 0;transform:rotate(-35deg) translateX(-100%)">Realized Gains</div>
<div class="t" style="left:574.56px;top:821px;font-size:12.6px;line-height:14px;color:#94a3b8;letter-spacing:-0.2px;transform-origin:0 0;transform:rotate(-35deg) translateX(-100%)">Unrealized Gains</div>
<div class="t" style="left:647.34px;top:821px;font-size:12.6px;line-height:14px;color:#94a3b8;letter-spacing:-0.2px;transform-origin:0 0;transform:rotate(-35deg) translateX(-100%)">Income</div>
<div class="t" style="left:720.12px;top:821px;font-size:12.6px;line-height:14px;color:#94a3b8;letter-spacing:-0.2px;transform-origin:0 0;transform:rotate(-35deg) translateX(-100%)">Distributions</div>
<div class="t" style="left:792.90px;top:821px;font-size:12.6px;line-height:14px;color:#94a3b8;letter-spacing:-0.2px;transform-origin:0 0;transform:rotate(-35deg) translateX(-100%)">Mgmt Fees</div>
<div class="t" style="left:865.68px;top:821px;font-size:12.6px;line-height:14px;color:#94a3b8;letter-spacing:-0.2px;transform-origin:0 0;transform:rotate(-35deg) translateX(-100%)">Fund Expenses</div>
<div class="t" style="left:938.46px;top:821px;font-size:12.6px;line-height:14px;color:#94a3b8;letter-spacing:-0.2px;transform-origin:0 0;transform:rotate(-35deg) translateX(-100%)">Carried Interest</div>
<div class="t" style="left:1011.24px;top:821px;font-size:12.6px;line-height:14px;color:#94a3b8;letter-spacing:-0.2px;transform-origin:0 0;transform:rotate(-35deg) translateX(-100%)">Ending NAV</div>
</body></html>
